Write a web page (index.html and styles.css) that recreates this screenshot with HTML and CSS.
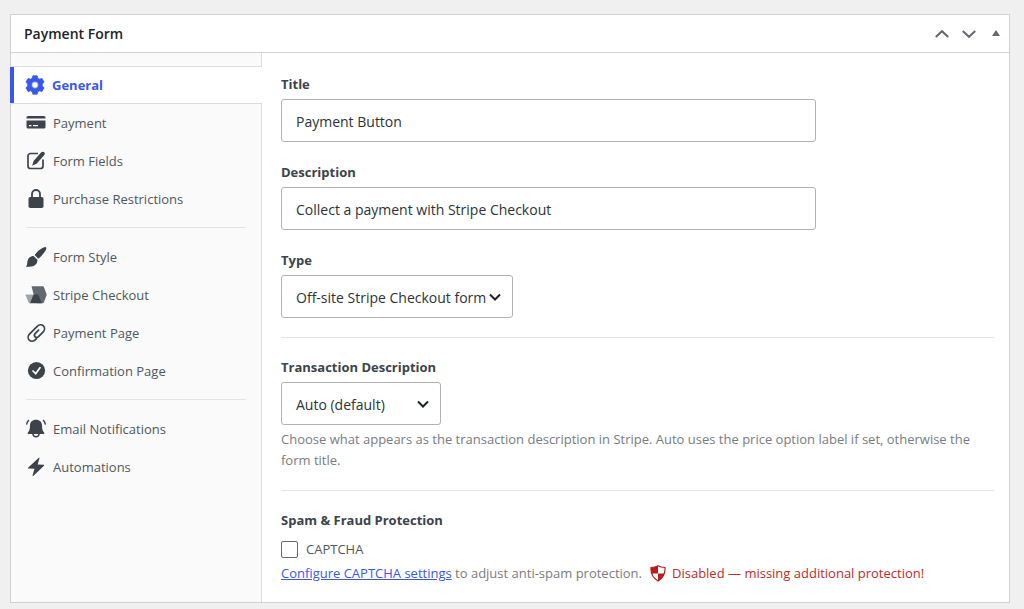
FILE: index.html
```html
<!DOCTYPE html>
<html lang="en">
<head>
  <meta charset="utf-8">
  <meta name="viewport" content="width=device-width, initial-scale=1">
  <title>Payment Form</title>
  <link rel="stylesheet" href="styles.css">
</head>
<body>
  <div class="postbox">
    <div class="postbox-header">
      <h2>Payment Form</h2>
      <div class="handle-actions">
        <button type="button" aria-label="Move up">
          <svg width="16" height="16" viewBox="0 0 16 16"><path d="M1.800 11 8 5.200l6.200 5.800" fill="none" stroke="currentColor" stroke-width="2"/></svg>
        </button>
        <button type="button" aria-label="Move down">
          <svg width="16" height="16" viewBox="0 0 16 16"><path d="M1.800 5 8 10.800 14.200 5" fill="none" stroke="currentColor" stroke-width="2"/></svg>
        </button>
        <button type="button" aria-label="Toggle panel">
          <svg width="16" height="16" viewBox="0 0 16 16"><path d="M8 4l4 6H4z" fill="currentColor"/></svg>
        </button>
      </div>
    </div>

    <div class="postbox-body">
      <nav class="tabs">
        <a href="#general" class="tab active">
          <svg viewBox="0 0 20 20"><path fill="currentColor" stroke="currentColor" stroke-width=".8" stroke-linejoin="round" fill-rule="evenodd" d="M7.800.8h4.400l.6 2.500 1.600.9 2.500-.8 2.200 3.800L17.200 9v2l1.900 1.800-2.200 3.800-2.500-.8-1.600.9-.6 2.500H7.800l-.6-2.500-1.600-.9-2.500.8-2.200-3.800L2.800 11V9L.9 7.200l2.200-3.800 2.500.8 1.600-.9zM10 6.600a3.400 3.400 0 1 0 0 6.800 3.400 3.400 0 0 0 0-6.800z"/></svg>
          General
        </a>
        <a href="#payment" class="tab">
          <svg viewBox="0 0 20 20"><path fill="currentColor" fill-rule="evenodd" d="M2 3h16a1.500 1.500 0 0 1 1.500 1.500v1H.5v-1A1.500 1.500 0 0 1 2 3zM.5 7.500h19V14a1.500 1.500 0 0 1-1.500 1.500H2A1.500 1.500 0 0 1 .5 14zM3 12v1.300h2.500V12zm4 0v1.300h5V12z"/></svg>
          Payment
        </a>
        <a href="#form-fields" class="tab">
          <svg viewBox="0 0 20 20"><path fill="none" stroke="currentColor" stroke-width="1.700" d="M12 2.500H4.500A2.500 2.500 0 0 0 2 5v10a2.500 2.500 0 0 0 2.500 2.500h10A2.500 2.500 0 0 0 17 15V8.500"/><path fill="currentColor" d="M14.800 1.700c1-1.200 2.600-1.300 3.400-.5.900.9.700 2.200-.3 3.400l-7.300 8.100-4.500 2 1.500-4.800z"/></svg>
          Form Fields
        </a>
        <a href="#restrictions" class="tab">
          <svg viewBox="0 0 20 20"><path fill="none" stroke="currentColor" stroke-width="1.800" d="M6 9V5a4 4 0 0 1 8 0v4"/><rect x="2.500" y="8" width="15" height="11" rx="1.800" fill="currentColor"/></svg>
          Purchase Restrictions
        </a>
        <hr>
        <a href="#form-style" class="tab">
          <svg viewBox="0 0 20 20"><path fill="currentColor" d="M19.800.3c.8.700.6 1.600 0 2.700-1.700 3-4.200 6.200-7.500 8.700L8.600 8c2.700-3.600 5.900-6.400 8.900-7.500.9-.4 1.800-.7 2.300-.2zM7.500 9l3.900 3.800c.2 3.700-2.400 6.300-6.200 6.700-1.900.2-3.900.3-5.500.2 1.700-1.400 1.300-3 1.700-5C2 11.200 4.200 9 7.500 9z"/></svg>
          Form Style
        </a>
        <a href="#stripe-checkout" class="tab">
          <svg viewBox="0 0 20 20"><path fill="#646970" d="M5.500 1.300h11.400q.7 0 1 .6l2.700 7.400q.2.500 0 1l-2.800 7.200q-.3.800-1 .8H11L7.800 10z"/><path fill="#a0a4a8" d="M0 9.500h8.500l-3.700 8.800h-1q-.8 0-1.200-.8L-.4 10.300q-.2-.8.400-.8z"/><path fill="#3c434a" d="M4 18.300l3-7.500q.5-1.300 1.600-1.300h2.600q1.100 0 1.600 1.300l3 7.500z"/></svg>
          Stripe Checkout
        </a>
        <a href="#payment-page" class="tab">
          <svg viewBox="0 0 20 20"><path fill="none" stroke="currentColor" stroke-width="1.700" stroke-linecap="round" d="M10.500 15.700l-1 1c-1.900 1.800-4.600 1.900-6.200.4-1.700-1.700-1.500-4.400.4-6.300l7.500-7.500c1.900-1.800 4.600-2 6.200-.4s1.500 4.300-.4 6.200l-4.500 4.500c-1 1-2.500 1.100-3.400.2-.9-.9-.8-2.400.2-3.400l3.300-3.300"/></svg>
          Payment Page
        </a>
        <a href="#confirmation-page" class="tab">
          <svg viewBox="0 0 20 20"><circle cx="10.500" cy="9.500" r="8.600" fill="currentColor"/><path fill="none" stroke="#fff" stroke-width="1.700" stroke-linecap="round" d="M7 10l2.700 2.700 4.300-6"/></svg>
          Confirmation Page
        </a>
        <hr>
        <a href="#email-notifications" class="tab">
          <svg viewBox="0 0 20 20"><path fill="currentColor" d="M10 .8c3.700 0 6 2.300 6 5.700 0 3.500.6 5.200 2.100 7 .6.700.2 1.500-.6 1.500h-15c-.8 0-1.200-.8-.6-1.500C3.400 11.700 4 10 4 6.500 4 3.100 6.300.8 10 .8z"/><path fill="none" stroke="currentColor" stroke-width="1.500" stroke-linecap="round" d="M7 15c.2 3.500 5.800 3.500 6 0M2.500 1.500Q.9 3.200.8 5M17.500 1.500Q19.100 3.200 19.200 5"/></svg>
          Email Notifications
        </a>
        <a href="#automations" class="tab">
          <svg viewBox="0 0 20 20"><path fill="currentColor" d="M12.800.7L2 10.700q-.4.800.5.900l6 .2-1.900 6.500q0 .9.900.4L18 8.700q.5-.8-.4-.9l-5.900-.2L13.500 1q0-.7-.7-.3z"/></svg>
          Automations
        </a>
      </nav>

      <form class="panel">
        <div class="field">
          <label for="title">Title</label>
          <input type="text" id="title" value="Payment Button">
        </div>
        <div class="field">
          <label for="description">Description</label>
          <input type="text" id="description" value="Collect a payment with Stripe Checkout">
        </div>
        <div class="field">
          <label for="type">Type</label>
          <div class="select select-type">
            <select id="type">
              <option>Off-site Stripe Checkout form</option>
            </select>
            <svg viewBox="0 0 12 12"><path d="M1 3.500l5 5 5-5" fill="none" stroke="currentColor" stroke-width="2"/></svg>
          </div>
        </div>
        <hr>
        <div class="field">
          <label for="transaction">Transaction Description</label>
          <div class="select select-transaction">
            <select id="transaction">
              <option>Auto (default)</option>
            </select>
            <svg viewBox="0 0 12 12"><path d="M1 3.500l5 5 5-5" fill="none" stroke="currentColor" stroke-width="2"/></svg>
          </div>
          <p class="help">Choose what appears as the transaction description in Stripe. Auto uses the price option label if set, otherwise the form title.</p>
        </div>
        <hr>
        <fieldset class="field">
          <legend>Spam &amp; Fraud Protection</legend>
          <label class="check" for="captcha"><input type="checkbox" id="captcha">CAPTCHA</label>
          <p class="help captcha-help">
            <span><a href="#captcha-settings">Configure CAPTCHA settings</a> to adjust anti-spam protection.</span>
            <span class="warning">
              <svg viewBox="0 0 16 18"><path fill="#fff" stroke="currentColor" stroke-width="1.200" d="M8 .8c2 1.200 4.200 1.600 7 1.700.4 6-2 10.600-7 13.500C3 13.100.6 8.500 1 2.500 3.800 2.400 6 2 8 .8z"/><path fill="currentColor" d="M8 .8v7.700H1.500Q.7 5.600 1 2.600c3-.1 5-.6 7-1.800zM8 8.500h6.200c-.8 3.600-2.800 6-6.200 7.700z"/></svg>
              Disabled — missing additional protection!
            </span>
          </p>
        </fieldset>
      </form>
    </div>
  </div>
</body>
</html>
```

FILE: styles.css
```css
* {
  box-sizing: border-box;
}

body {
  margin: 14px 14px 0 10px;
  background: #f0f0f1;
  color: #3c434a;
  font-family: "Segoe UI", "Open Sans", "Noto Sans", sans-serif;
  font-size: 13px;
  line-height: 20px;
}

.postbox {
  background: #fff;
  border: 1px solid #d0d1d4;
}

.postbox-header {
  display: flex;
  align-items: center;
  justify-content: space-between;
  height: 38px;
  padding-left: 13px;
  border-bottom: 1px solid #d0d1d4;
}

.postbox-header h2 {
  margin: 0;
  font-size: 14px;
  font-weight: 600;
  color: #1d2327;
}

.handle-actions {
  display: flex;
}

.handle-actions button {
  display: flex;
  justify-content: center;
  width: 27px;
  padding: 0;
  border: 0;
  background: none;
  color: #646970;
}

.postbox-body {
  display: grid;
  grid-template-columns: 251px 1fr;
}

/* sidebar */
.tabs {
  padding-top: 13px;
  background: #fafafa;
  border-right: 1px solid #dcdcde;
}

.tab {
  display: flex;
  align-items: center;
  gap: 7px;
  height: 38px;
  padding-left: 15px;
  color: #50575e;
  text-decoration: none;
}

.tab svg {
  width: 20px;
  height: 20px;
  color: #3c434a;
  overflow: visible;
}

.tab.active {
  margin: 0 -1px;
  background: #fff;
  border: solid #dcdcde;
  border-width: 1px 0;
  box-shadow: inset 4px 0 #3858e9;
  color: #3858e9;
  font-weight: 700;
}

.tab.active svg {
  color: #3858e9;
}

hr {
  margin: 19px 0;
  border: 0;
  border-top: 1px solid #e4e4e6;
}

.tabs hr {
  margin: 9px 15px 10px;
}

/* settings */
.panel {
  padding: 21px 15px 18px 19px;
}

.field {
  margin: 0;
  padding: 0;
  border: 0;
}

.field + .field {
  margin-top: 20px;
}

.field label,
.field legend {
  display: block;
  margin-bottom: 5px;
  padding: 0;
  font-weight: 700;
}

.field legend {
  margin-bottom: 9px;
}

input[type="text"],
select {
  display: block;
  height: 43px;
  padding: 1px 14px 0;
  border: 1px solid #b0b2b5;
  border-radius: 3px;
  background: #fff;
  color: #2c3338;
  font-family: inherit;
  font-size: 14px;
}

input[type="text"] {
  width: 75%;
}

.select {
  position: relative;
  max-width: 100%;
}

.select-type {
  width: 232px;
}

.select-transaction {
  width: 160px;
}

select {
  width: 100%;
  appearance: none;
}

.select svg {
  position: absolute;
  top: 16px;
  right: 12px;
  width: 12px;
  height: 12px;
  color: #1d2327;
  pointer-events: none;
}

.help {
  margin: 4px 0 0;
  line-height: 21px;
  color: #787c82;
}

.field .check {
  display: flex;
  align-items: center;
  gap: 8px;
  margin: 0;
  font-weight: 400;
  color: #50575e;
}

.check input {
  width: 17px;
  height: 17px;
  margin: 0;
  appearance: none;
  border: 1px solid #646970;
  border-radius: 2px;
  background: #fff;
}

.captcha-help {
  display: flex;
  flex-wrap: wrap;
  gap: 0 8px;
}

.help a {
  color: #3858e9;
}

.warning {
  display: flex;
  align-items: center;
  gap: 6px;
  color: #c02b2b;
}

.warning svg {
  width: 16px;
  height: 18px;
  color: #b91c1c;
}
```
